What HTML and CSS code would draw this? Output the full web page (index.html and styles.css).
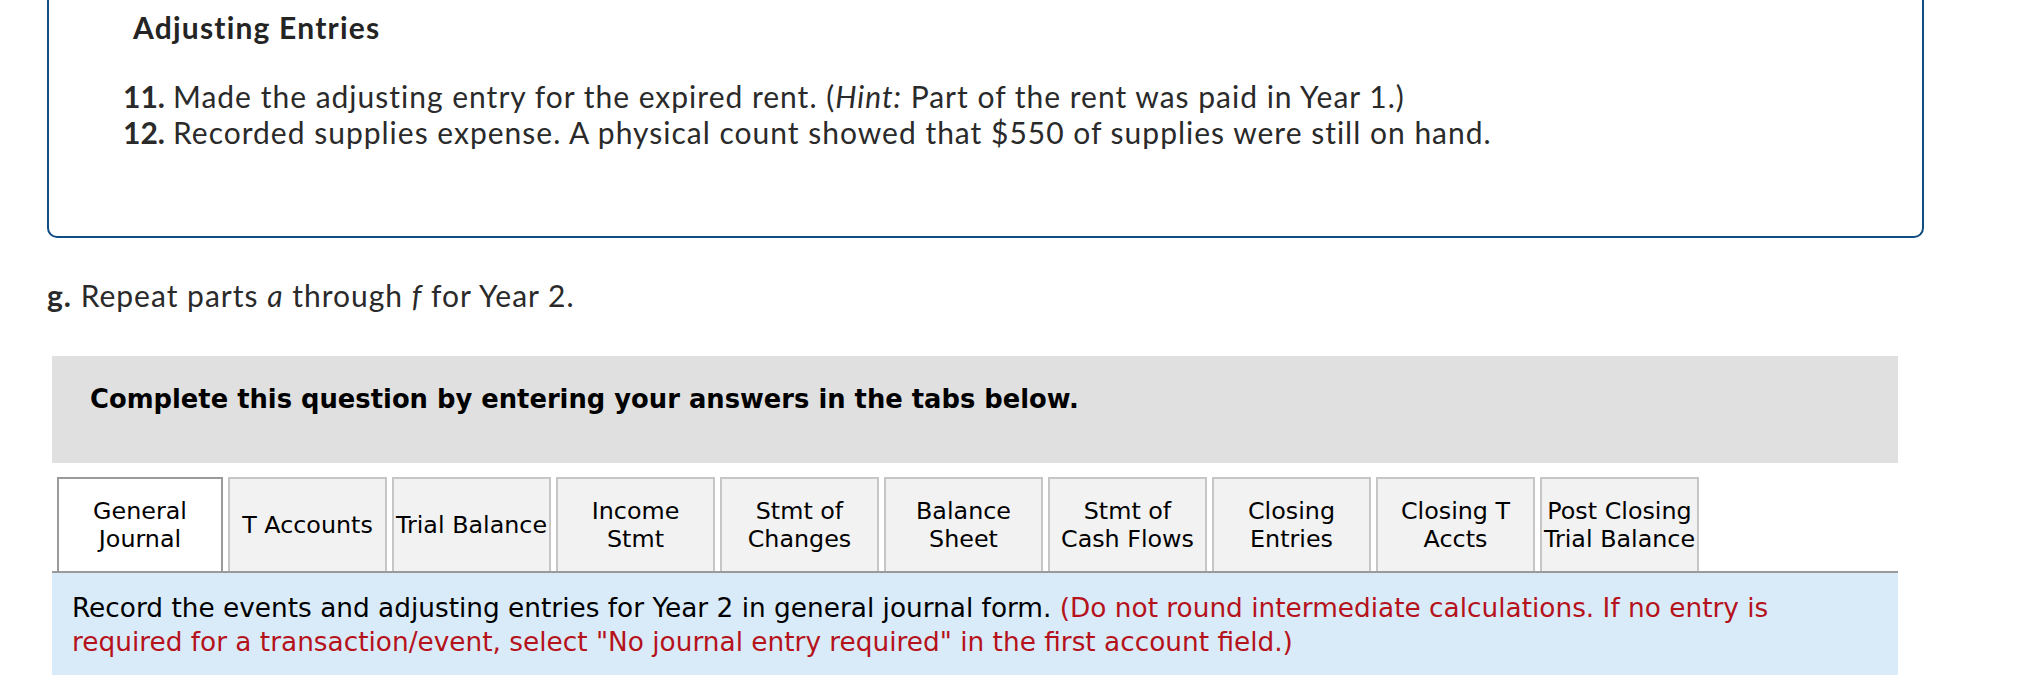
FILE: index.html
```html
<!DOCTYPE html>
<html lang="en">
<head>
<meta charset="utf-8">
<title>Adjusting Entries</title>
<link rel="stylesheet" href="styles.css">
</head>
<body>
<main class="page">
  <section class="prompt-box">
    <h3 class="prompt-title">Adjusting Entries</h3>
    <ol class="steps">
      <li class="step"><span class="num">11.</span><span class="txt">Made the adjusting entry for the expired rent. (<em>Hint:</em> Part of the rent was paid in Year 1.)</span></li>
      <li class="step"><span class="num">12.</span><span class="txt">Recorded supplies expense. A physical count showed that $550 of supplies were still on hand.</span></li>
    </ol>
  </section>

  <p class="part"><b>g.</b> Repeat parts <em>a</em> through <em>f</em> for Year 2.</p>

  <section class="question">
    <div class="instruction">Complete this question by entering your answers in the tabs below.</div>
    <div class="tab-row">
      <div class="tab active">General<br>Journal</div>
      <div class="tab">T Accounts</div>
      <div class="tab">Trial Balance</div>
      <div class="tab">Income<br>Stmt</div>
      <div class="tab">Stmt of<br>Changes</div>
      <div class="tab">Balance<br>Sheet</div>
      <div class="tab">Stmt of<br>Cash Flows</div>
      <div class="tab">Closing<br>Entries</div>
      <div class="tab">Closing T<br>Accts</div>
      <div class="tab">Post Closing<br>Trial Balance</div>
    </div>
    <div class="panel"><p class="panel-text">Record the events and adjusting entries for Year 2 in general journal form. <span class="warn">(Do not round intermediate calculations. If no entry is</span> <span class="warn">required for a transaction/event, select "No journal entry required" in the first account field.)</span></p></div>
  </section>
</main>
</body>
</html>
```

FILE: styles.css
```css
html, body {
  margin: 0;
  padding: 0;
  background: #ffffff;
}

.page {
  display: flex;
  flex-direction: column;
  align-items: flex-start;
}

/* ---------- prompt box (Proxima-like text) ---------- */
.prompt-box {
  box-sizing: border-box;
  width: 1877px;
  margin: -40px 0 0 47px;
  padding: 47px 0 86px 64px;
  border: 2px solid #0f4c81;
  border-radius: 10px;
  font-family: "Lato", "Open Sans", sans-serif;
  color: #2a2a2a;
}

.prompt-title {
  margin: 0 0 0 20px;
  font-size: 30px;
  line-height: 36px;
  font-weight: 700;
  letter-spacing: 1.2px;
  color: #242424;
}

.steps {
  list-style: none;
  margin: 33px 0 0 0;
  padding: 0;
}

.step {
  display: grid;
  grid-template-columns: 52px 1fr;
  column-gap: 8px;
  font-size: 30px;
  line-height: 36px;
  letter-spacing: 1px;
}

.num {
  text-align: right;
  font-weight: 700;
  letter-spacing: 0;
}

.part {
  margin: 39px 0 0 47px;
  font-family: "Lato", "Open Sans", sans-serif;
  font-size: 30px;
  line-height: 36px;
  letter-spacing: 1px;
  color: #2a2a2a;
}

/* ---------- question widget (Verdana-like text) ---------- */
.question {
  width: 1846px;
  margin: 43px 0 0 52px;
  font-family: "DejaVu Sans", Verdana, sans-serif;
  color: #000;
}

.instruction {
  box-sizing: border-box;
  height: 107px;
  padding: 28px 0 0 38px;
  background: #e0e0e0;
  font-size: 25.8px;
  line-height: 30px;
  font-weight: 700;
}

.tab-row {
  display: flex;
  align-items: flex-end;
  gap: 5px;
  margin-top: 14px;
  padding-left: 5px;
  border-bottom: 2px solid #9a9a9a;
}

.tab {
  box-sizing: border-box;
  width: 159px;
  height: 94px;
  display: flex;
  align-items: center;
  justify-content: center;
  text-align: center;
  white-space: nowrap;
  background: #f2f2f2;
  border: 2px solid #c6c6c6;
  border-bottom: none;
  font-size: 23.8px;
  line-height: 28px;
}

.tab.active {
  width: 166px;
  background: #ffffff;
  border-color: #9a9a9a;
}

.panel {
  padding: 18px 76px 16px 20px;
  background: #d9ebf8;
}

.panel-text {
  margin: 0;
  font-size: 26.35px;
  line-height: 34px;
}

.warn {
  color: #b5121b;
}
```
